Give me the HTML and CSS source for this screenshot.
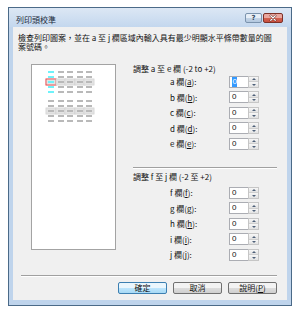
FILE: index.html
```html
<!DOCTYPE html>
<html lang="zh-Hant">
<head>
  <meta charset="UTF-8" />
  <title>列印頭校準</title>
  <link rel="stylesheet" href="styles.css">
</head>
<body>
  <div class="window">
    <div class="titlebar">
      <span class="title">列印頭校準</span>
      <div class="caption-buttons">
        <span class="cap-btn help">?</span>
        <span class="cap-btn close">
          <svg width="20" height="10" viewBox="0 0 20 10">
            <path d="M7.5 2.5 L12.5 7.5 M12.5 2.5 L7.5 7.5" stroke="#5a1a14" stroke-width="2.6" stroke-linecap="round" />
            <path d="M7.5 2.5 L12.5 7.5 M12.5 2.5 L7.5 7.5" stroke="#ffffff" stroke-width="1.4" stroke-linecap="round" />
          </svg>
        </span>
      </div>
    </div>

    <div class="client">
      <p class="intro">檢查列印圖案，並在 a 至 j 欄區域內輸入具有最少明顯水平條帶數量的圖案號碼。</p>

      <div class="main">
        <div class="preview">
          <div class="pattern">
            <i class="cyan"></i><i></i><i></i><i></i><i></i>
            <i class="cyan"></i><i></i><i></i><i></i><i></i>
            <i class="cyan picked"></i><i class="hl"></i><i class="hl"></i><i class="hl"></i><i class="hl"></i>
            <i class="cyan"></i><i></i><i></i><i></i><i></i>
            <i class="cyan"></i><i></i><i></i><i></i><i></i>
          </div>
          <div class="pattern">
            <i></i><i></i><i></i><i></i><i></i>
            <i></i><i></i><i></i><i></i><i></i>
            <i class="hl"></i><i class="hl"></i><i class="hl"></i><i class="hl"></i><i class="hl"></i>
            <i></i><i></i><i></i><i></i><i></i>
            <i></i><i></i><i></i><i></i><i></i>
          </div>
        </div>

        <div class="panel">
          <div class="group-title">調整 a 至 e 欄 (-2 to +2)</div>
          <div class="rows">
            <div class="row"><span class="lbl">a 欄(<u>a</u>):</span><span class="field"><span class="sel">0</span></span><span class="spin"><i class="up"></i><i class="dn"></i></span></div>
            <div class="row"><span class="lbl">b 欄(<u>b</u>):</span><span class="field">0</span><span class="spin"><i class="up"></i><i class="dn"></i></span></div>
            <div class="row"><span class="lbl">c 欄(<u>c</u>):</span><span class="field">0</span><span class="spin"><i class="up"></i><i class="dn"></i></span></div>
            <div class="row"><span class="lbl">d 欄(<u>d</u>):</span><span class="field">0</span><span class="spin"><i class="up"></i><i class="dn"></i></span></div>
            <div class="row"><span class="lbl">e 欄(<u>e</u>):</span><span class="field">0</span><span class="spin"><i class="up"></i><i class="dn"></i></span></div>
          </div>

          <div class="sep"></div>

          <div class="group-title second">調整 f 至 j 欄 (-2 至 +2)</div>
          <div class="rows">
            <div class="row"><span class="lbl">f 欄(<u>f</u>):</span><span class="field">0</span><span class="spin"><i class="up"></i><i class="dn"></i></span></div>
            <div class="row"><span class="lbl">g 欄(<u>g</u>):</span><span class="field">0</span><span class="spin"><i class="up"></i><i class="dn"></i></span></div>
            <div class="row"><span class="lbl">h 欄(<u>h</u>):</span><span class="field">0</span><span class="spin"><i class="up"></i><i class="dn"></i></span></div>
            <div class="row"><span class="lbl">i 欄(<u>i</u>):</span><span class="field">0</span><span class="spin"><i class="up"></i><i class="dn"></i></span></div>
            <div class="row"><span class="lbl">j 欄(<u>j</u>):</span><span class="field">0</span><span class="spin"><i class="up"></i><i class="dn"></i></span></div>
          </div>
        </div>
      </div>

      <div class="sep bottom-sep"></div>

      <div class="buttons">
        <span class="btn default">確定</span>
        <span class="btn">取消</span>
        <span class="btn">說明(<u>P</u>)</span>
      </div>
    </div>
  </div>
</body>
</html>
```

FILE: styles.css
```css
:root {
  --frame: #bfd4ec;
  --borda-janela: #4b6a88;
  --cliente: #f0f0f0;
  --traco: #b9b9b9;
  --ciano: #6ef2fa;
}

* {
  box-sizing: border-box;
}

body {
  margin: 0;
  background: #fff;
  font-family: "Noto Sans CJK TC", "Noto Sans", sans-serif;
  font-size: 8px;
  color: #111;
}

.window {
  margin: 7px 0 0 8px;
  width: 284px;
  border: 1px solid var(--borda-janela);
  background: var(--frame);
  padding: 0 4px 5px;
  box-shadow: 0 1px 0 #2c4a58;
}

.titlebar {
  height: 19px;
  margin: 0 -4px;
  padding: 0 8px 0 7px;
  display: flex;
  justify-content: space-between;
  align-items: flex-start;
  background: linear-gradient(#dce7f4, #c3d7ee);
}

.title {
  margin-top: 7px;
  line-height: 9px;
  color: #1b2a3a;
}

.caption-buttons {
  display: flex;
  gap: 1px;
  margin-top: 5px;
}

.cap-btn {
  height: 10px;
  border-radius: 2px;
  display: flex;
  justify-content: center;
  align-items: center;
}

.help {
  width: 17px;
  border: 1px solid #7b93ad;
  background: linear-gradient(#e6eef7 45%, #c2d3e6 55%, #b3c8df);
  color: #33475e;
  font-family: "DejaVu Sans", sans-serif;
  font-size: 7px;
  font-weight: bold;
  line-height: 8px;
}

.close {
  width: 20px;
  border: 1px solid #7d3128;
  background: linear-gradient(#e9a79f 45%, #d2604f 55%, #c9503f);
}

.close svg {
  display: block;
}

.client {
  height: 273px;
  background: var(--cliente);
  padding: 6px 10px 0 5px;
  display: flex;
  flex-direction: column;
}

.intro {
  margin: 0;
  line-height: 9px;
}

.main {
  display: flex;
  align-items: flex-start;
  margin-top: 13px;
}

.preview {
  margin-left: 13px;
  width: 85px;
  height: 186px;
  border: 1px solid #a3a3a3;
  background: #fff;
  padding: 5.5px 0 0 16px;
}

.pattern {
  display: grid;
  grid-template-columns: repeat(5, 6px);
  column-gap: 3.5px;
  row-gap: 3px;
}

.pattern + .pattern {
  margin-top: 7.5px;
}

.pattern i {
  height: 2px;
  background: var(--traco);
}

.pattern .hl {
  box-shadow: 0 0 0 1.8px #e3e3e3, 0 0 0 2.4px #cdcdcd;
}

.pattern .cyan {
  background: var(--ciano);
}

.pattern .picked {
  box-shadow: 0 0 0 1.6px #e3e3e3, 0 0 0 2.5px #e8373a;
}

.panel {
  margin-left: 17px;
  width: 144px;
}

.group-title {
  line-height: 9px;
  margin-bottom: 1px;
}

.group-title.second {
  margin-bottom: 4px;
}

.rows {
  display: grid;
  grid-auto-rows: 15.5px;
}

.row {
  display: flex;
  align-items: center;
  padding-left: 37px;
}

.lbl {
  width: 59px;
  line-height: 9px;
}

.field {
  width: 19px;
  height: 12px;
  background: #fff;
  border: 1px solid #abadb3;
  border-right: none;
  padding-left: 2px;
  line-height: 10px;
  font-family: "Liberation Sans", sans-serif;
}

.sel {
  display: inline-block;
  background: #3399ff;
  color: #fff;
  padding: 0 0.5px;
}

.spin {
  width: 11px;
  height: 12px;
  display: flex;
  flex-direction: column;
  border: 1px solid #c6c6c6;
  background: #e8e8e8;
}

.spin i {
  flex: 1;
  display: flex;
  justify-content: center;
  align-items: center;
  background: linear-gradient(#f7f7f7, #e2e2e2);
}

.spin i + i {
  border-top: 1px solid #cfcfcf;
}

.spin .up::before,
.spin .dn::before {
  content: "";
  border-left: 2px solid transparent;
  border-right: 2px solid transparent;
}

.spin .up::before {
  border-bottom: 2px solid #4e6079;
}

.spin .dn::before {
  border-top: 2px solid #4e6079;
}

.sep {
  border-top: 1px solid #a0a0a0;
  border-bottom: 1px solid #fff;
  margin: 15.5px 0 3px;
}

.bottom-sep {
  margin: 12.5px 0 5px 3px;
}

.buttons {
  display: flex;
  justify-content: flex-end;
  gap: 6px;
}

.btn {
  width: 49px;
  height: 12px;
  border: 1px solid #707070;
  border-radius: 2px;
  background: linear-gradient(#f3f3f3 50%, #dddddd 50%, #cfcfcf);
  line-height: 10px;
  text-align: center;
}

.btn.default {
  border-color: #3c7fb1;
  background: linear-gradient(#eaf6fd 50%, #bee6fd 50%, #a7d9f5);
}
```
